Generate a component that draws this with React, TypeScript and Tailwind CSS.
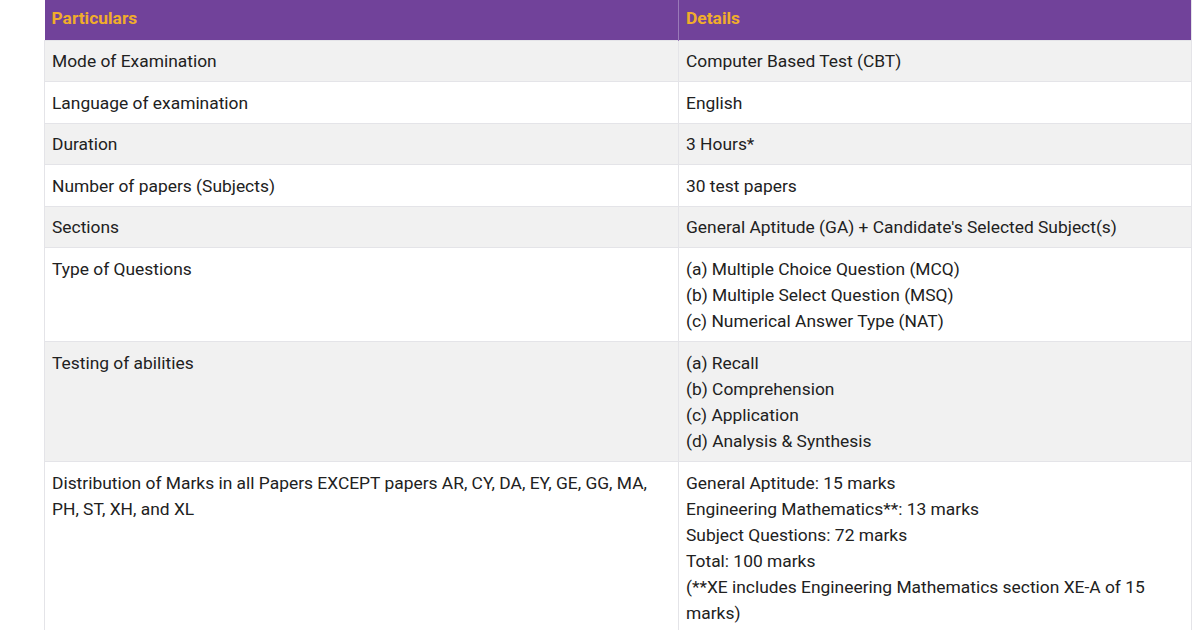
import React from "react";

const rows: { left: React.ReactNode; right: string[] }[] = [
  { left: "Mode of Examination", right: ["Computer Based Test (CBT)"] },
  { left: "Language of examination", right: ["English"] },
  { left: "Duration", right: ["3 Hours*"] },
  { left: "Number of papers (Subjects)", right: ["30 test papers"] },
  { left: "Sections", right: ["General Aptitude (GA) + Candidate's Selected Subject(s)"] },
  {
    left: "Type of Questions",
    right: [
      "(a) Multiple Choice Question (MCQ)",
      "(b) Multiple Select Question (MSQ)",
      "(c) Numerical Answer Type (NAT)",
    ],
  },
  {
    left: "Testing of abilities",
    right: ["(a) Recall", "(b) Comprehension", "(c) Application", "(d) Analysis & Synthesis"],
  },
  {
    left: (
      <>
        Distribution of Marks in all Papers EXCEPT papers AR, CY, DA, EY, GE, GG, MA,
        <br />
        PH, ST, XH, and XL
      </>
    ),
    right: [
      "General Aptitude: 15 marks",
      "Engineering Mathematics**: 13 marks",
      "Subject Questions: 72 marks",
      "Total: 100 marks",
      "(**XE includes Engineering Mathematics section XE-A of 15",
      "marks)",
    ],
  },
];

export default function App() {
  return (
    <div
      className="w-[1200px] h-[630px] overflow-hidden bg-white text-[17.4px] text-[#212121]"
      style={{ fontFamily: "Roboto, 'Liberation Sans', sans-serif" }}
    >
      <div className="pl-[44px] w-[1192px]">
        <table className="w-full border-collapse table-fixed">
          <colgroup>
            <col className="w-[634px]" />
            <col />
          </colgroup>
          <thead>
            <tr className="bg-[#71429a] h-[40px]">
              <th className="text-left font-bold text-[#f0ad2b] px-[7px] pb-[3px] leading-[26px] border-r border-[#9a7ab8]">
                Particulars
              </th>
              <th className="text-left font-bold text-[#f0ad2b] px-[7px] pb-[3px] leading-[26px] border-r border-[#e3e3e8]">
                Details
              </th>
            </tr>
          </thead>
          <tbody>
            {rows.map((r, i) => (
              <tr key={i} className={i % 2 === 0 ? "bg-[#f1f1f1]" : "bg-white"}>
                <td className="align-top px-[7px] pt-[7.5px] pb-[7px] leading-[26.1px] border border-[#e4e4e8]">
                  {r.left}
                </td>
                <td className="align-top px-[7px] pt-[7.5px] pb-[7px] leading-[26.1px] border border-[#e4e4e8]">
                  {r.right.map((t, j) => (
                    <div key={j}>{t}</div>
                  ))}
                </td>
              </tr>
            ))}
          </tbody>
        </table>
      </div>
    </div>
  );
}
